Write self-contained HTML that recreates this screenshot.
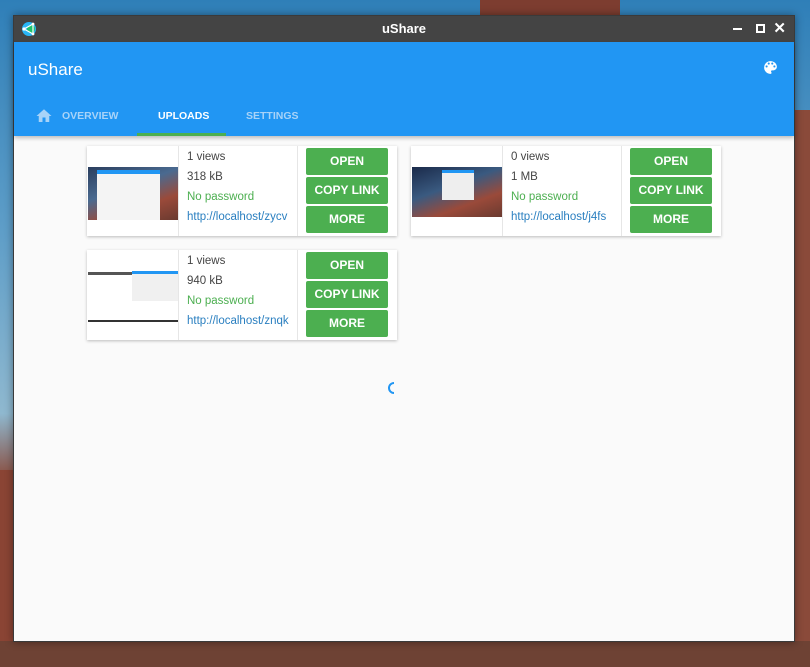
<!DOCTYPE html>
<html><head><style>
*{margin:0;padding:0;box-sizing:border-box}
html,body{width:810px;height:667px;overflow:hidden}
body{position:relative;font-family:"Liberation Sans",sans-serif;
background:linear-gradient(180deg,#2f7fb8 0%,#5f9ec8 35%,#8fb8cf 62%,#8a4a3a 72%,#7a3a2a 88%,#5a3a30 100%)}
.rock{position:absolute}
.win{position:absolute;left:13px;top:15px;width:782px;height:627px;background:#fafafa;border:1px solid #3a3a3a;box-shadow:0 0 8px rgba(0,0,0,.4)}
.tb{height:26px;background:#444;color:#fff;font-weight:bold;font-size:13px;text-align:center;line-height:26px;position:relative}
.hd{height:94px;background:#2196f3;position:relative;box-shadow:0 2px 4px rgba(0,0,0,.25)}
.title{position:absolute;left:14px;top:18px;color:#fff;font-size:17px}
.tab{position:absolute;top:68px;font-size:10.5px;font-weight:bold;color:#a8d3f8}
.card{position:absolute;width:310px;height:90px;background:#fff;box-shadow:0 1px 3px rgba(0,0,0,.25);}
.th{position:absolute;left:0;top:0;width:92px;height:90px;border-right:1px solid #e6e6e6}
.inf{position:absolute;left:92px;top:0;width:119px;height:90px;border-right:1px solid #e6e6e6;font-size:11.5px;color:#444;padding-left:8px}
.inf div{height:20px;line-height:22px}
.btn{position:absolute;left:219px;width:82px;height:27px;background:#4caf50;color:#fff;font-size:12px;font-weight:bold;text-align:center;line-height:27px;border-radius:2px}
.g{color:#4caf50}.b{color:#2a7fc0}
</style></head><body>
<div class="rock" style="left:480px;top:0;width:140px;height:15px;background:#7d3d30"></div>
<div class="rock" style="left:795px;top:110px;width:15px;height:560px;background:#8a4a3a"></div>
<div class="rock" style="left:0;top:470px;width:13px;height:200px;background:#8a4434"></div>
<div class="rock" style="left:0;top:641px;width:810px;height:26px;background:#6e4234"></div>
<div class="win">
 <div class="tb">uShare
  <svg style="position:absolute;left:7px;top:5px" width="16" height="16" viewBox="0 0 16 16"><circle cx="8" cy="8" r="7" fill="#29b6f6"/><circle cx="10" cy="8" r="4" fill="#1ec16a"/><path d="M3 8L12 3M3 8L12 13M12 3V13" stroke="#fff" stroke-width="1.2"/><circle cx="3" cy="8" r="1.6" fill="#fff"/><circle cx="12" cy="3" r="1.4" fill="#fff"/><circle cx="12" cy="13" r="1.4" fill="#fff"/></svg>
  <span style="position:absolute;right:52px;top:12px;width:9px;height:2px;background:#fff"></span>
  <span style="position:absolute;right:29px;top:8px;width:9px;height:9px;border:2px solid #fff"></span>
  <span style="position:absolute;right:8px;top:0;font-size:15px">✕</span>
 </div>
 <div class="hd">
  <div class="title">uShare</div>
  <svg style="position:absolute;right:15px;top:17px" width="17" height="17" viewBox="0 0 24 24"><path fill="#fff" d="M12 3a9 9 0 000 18c.83 0 1.5-.67 1.5-1.5 0-.39-.15-.74-.39-1.01-.23-.26-.38-.61-.38-.99 0-.83.67-1.5 1.5-1.5H16c2.76 0 5-2.24 5-5 0-4.42-4.03-8-9-8zm-5.5 9a1.5 1.5 0 110-3 1.5 1.5 0 010 3zm3-4a1.5 1.5 0 110-3 1.5 1.5 0 010 3zm5 0a1.5 1.5 0 110-3 1.5 1.5 0 010 3zm3 4a1.5 1.5 0 110-3 1.5 1.5 0 010 3z"/></svg>
  <svg style="position:absolute;left:21px;top:65px" width="18" height="18" viewBox="0 0 24 24"><path fill="#a8d3f8" d="M10 20v-6h4v6h5v-8h3L12 3 2 12h3v8z"/></svg>
  <div class="tab" style="left:48px">OVERVIEW</div>
  <div class="tab" style="left:144px;color:#fff">UPLOADS</div>
  <div class="tab" style="left:232px">SETTINGS</div>
  <div style="position:absolute;left:123px;top:91px;width:89px;height:3px;background:#4caf50"></div>
 </div>
 <div class="card" style="left:73px;top:130px">
  <div class="th"><div style="position:absolute;left:1px;top:21px;width:90px;height:53px;background:linear-gradient(160deg,#2a3e5e 0%,#4a6a90 40%,#9a4a3a 70%,#6a3a30 100%)"><div style="position:absolute;left:9px;top:3px;width:63px;height:50px;background:#f4f4f4;border-top:4px solid #2196f3"></div></div></div>
  <div class="inf"><div>1 views</div><div>318 kB</div><div class="g">No password</div><div class="b">http://localhost/zycv</div></div>
  <div class="btn" style="top:2px">OPEN</div><div class="btn" style="top:31px">COPY LINK</div><div class="btn" style="top:60px">MORE</div>
 </div>
 <div class="card" style="left:397px;top:130px">
  <div class="th"><div style="position:absolute;left:1px;top:21px;width:90px;height:50px;background:linear-gradient(160deg,#1a2a4a 0%,#3a5a80 40%,#9a4a3a 70%,#6a3a30 100%)"><div style="position:absolute;left:30px;top:3px;width:32px;height:30px;background:#eee;border-top:3px solid #2196f3"></div></div></div>
  <div class="inf"><div>0 views</div><div>1 MB</div><div class="g">No password</div><div class="b">http://localhost/j4fs</div></div>
  <div class="btn" style="top:2px">OPEN</div><div class="btn" style="top:31px">COPY LINK</div><div class="btn" style="top:60px">MORE</div>
 </div>
 <div class="card" style="left:73px;top:234px">
  <div class="th"><div style="position:absolute;left:1px;top:19px;width:90px;height:53px;background:#fff;border-bottom:2px solid #333"><div style="position:absolute;left:44px;top:2px;width:46px;height:30px;background:#f0f0f0;border-top:3px solid #2196f3"></div><div style="position:absolute;left:0;top:3px;width:44px;height:3px;background:#555"></div></div></div>
  <div class="inf"><div>1 views</div><div>940 kB</div><div class="g">No password</div><div class="b">http://localhost/znqk</div></div>
  <div class="btn" style="top:2px">OPEN</div><div class="btn" style="top:31px">COPY LINK</div><div class="btn" style="top:60px">MORE</div>
 </div>
 <svg style="position:absolute;left:373px;top:365px" width="14" height="14" viewBox="0 0 14 14"><path d="M7 2A5 5 0 0 0 7 12" fill="none" stroke="#2196f3" stroke-width="2"/></svg>
</div>
</body></html>
